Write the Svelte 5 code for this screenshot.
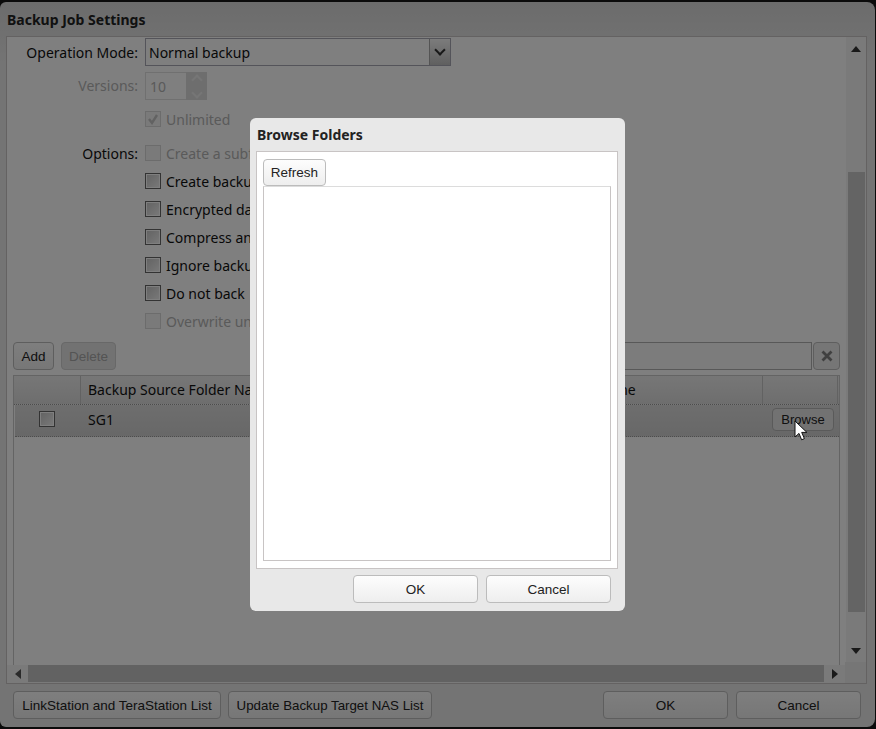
<script lang="ts">
  const options = [
    { label: "Create a subfolder", disabled: true, checked: false },
    { label: "Create backup", disabled: false, checked: false },
    { label: "Encrypted data", disabled: false, checked: false },
    { label: "Compress and", disabled: false, checked: false },
    { label: "Ignore backup", disabled: false, checked: false },
    { label: "Do not back", disabled: false, checked: false },
    { label: "Overwrite unchanged", disabled: true, checked: false }
  ];
</script>

<div class="window">
  <h1 class="title">Backup Job Settings</h1>

  <div class="panel">
    <div class="scroll-row">
      <div class="content">
        <div class="form">
          <div class="field mode">
            <span class="label">Operation Mode:</span>
            <div class="select">
              <span>Normal backup</span>
              <span class="select-btn"><i class="chev dark"></i></span>
            </div>
          </div>
          <div class="field versions">
            <span class="label off">Versions:</span>
            <div class="spinner">
              <span class="spin-value">10</span>
              <span class="spin-btns"><i class="chev up"></i><i class="chev dn"></i></span>
            </div>
          </div>
          <div class="field unlimited">
            <span class="label"></span>
            <span class="check off">
              <svg viewBox="0 0 16 16" width="16" height="16"><path d="M4 8l3 4 5-8" fill="none" stroke="#c4c4c4" stroke-width="2.4" /></svg>
            </span>
            <span class="off">Unlimited</span>
          </div>
          <div class="opts">
            {#each options as opt, i}
              <div class="field opt">
                <span class="label">{i === 0 ? "Options:" : ""}</span>
                <span class="check" class:off={opt.disabled}></span>
                <span class:off={opt.disabled}>{opt.label}</span>
              </div>
            {/each}
          </div>
        </div>

        <div class="toolbar">
          <button class="btn add">Add</button>
          <button class="btn del" disabled>Delete</button>
          <div class="spacer"></div>
          <div class="search"></div>
          <button class="btn clear" aria-label="Clear">
            <svg viewBox="0 0 12 12" width="12" height="12"><path d="M1.5 1.5l9 9M10.5 1.5l-9 9" stroke="#808080" stroke-width="2.8" /></svg>
          </button>
        </div>

        <div class="grid">
          <div class="grid-row head">
            <div class="cell c1"></div>
            <div class="cell c2">Backup Source Folder Name</div>
            <div class="cell c3">Backup Target Folder Name</div>
            <div class="cell c4"></div>
          </div>
          <div class="grid-row item">
            <div class="cell c1"><span class="check box"></span></div>
            <div class="cell c2">SG1</div>
            <div class="cell c3"></div>
            <div class="cell c4"><button class="btn browse">Browse</button></div>
          </div>
        </div>
      </div>

      <div class="vbar">
        <span class="arrow"><i class="tri up"></i></span>
        <div class="vtrack"><div class="vthumb"></div></div>
        <span class="arrow"><i class="tri down"></i></span>
      </div>
    </div>

    <div class="hbar">
      <span class="harrow"><i class="tri left"></i></span>
      <div class="hthumb"></div>
      <span class="harrow"><i class="tri right"></i></span>
      <span class="corner"></span>
    </div>
  </div>

  <div class="footer">
    <button class="btn list1">LinkStation and TeraStation List</button>
    <button class="btn list2">Update Backup Target NAS List</button>
    <div class="spacer"></div>
    <button class="btn wide">OK</button>
    <button class="btn wide">Cancel</button>
  </div>
</div>

<div class="mask"></div>

<div class="modal">
  <h2 class="modal-title">Browse Folders</h2>
  <div class="modal-panel">
    <button class="btn refresh">Refresh</button>
    <div class="tree"></div>
  </div>
  <div class="modal-footer">
    <button class="btn wide">OK</button>
    <button class="btn wide">Cancel</button>
  </div>
</div>

<svg class="cursor" viewBox="0 0 14 22" width="14" height="22">
  <path d="M1 1v16l4-3.6 2.6 6.4 2.8-1.2-2.7-6.2h5.2z" fill="#fff" stroke="#111" stroke-width="1" />
</svg>

<style>
  :global(body) {
    margin: 0;
    background: #161616;
    font-family: "Noto Sans", "Open Sans", sans-serif;
    font-size: 14px;
    color: #111;
  }
  .window {
    box-sizing: border-box;
    width: 875px;
    height: 725px;
    margin-top: 2px;
    background: linear-gradient(#d8d8d8, #e8e8e8 60px);
    border-radius: 6px 8px 8px 6px;
    padding: 0 8px 0 6px;
    display: flex;
    flex-direction: column;
  }
  .title {
    margin: 0;
    height: 34px;
    box-sizing: border-box;
    padding: 8px 0 0 1px;
    font-size: 14px;
    line-height: 20px;
    font-weight: 700;
    color: #222;
  }
  .panel {
    box-sizing: border-box;
    height: 648px;
    background: #fff;
    border: 1px solid #c8c4c4;
    display: flex;
    flex-direction: column;
  }
  .scroll-row { flex: 1; display: flex; min-height: 0; }
  .content { flex: 1; min-width: 0; padding: 1px 0 0 6px; display: flex; flex-direction: column; }
  .form { display: flex; flex-direction: column; }
  .field { display: flex; align-items: center; height: 28px; }
  .label { width: 125px; margin-right: 7px; text-align: right; flex: none; }
  .off { color: #b4b4b4; }
  .label.off { color: #b4b4b4; margin-bottom: 2px; }
  .versions { margin-top: 6px; }
  .unlimited { margin-top: 5px; }
  .opts { margin-top: 6px; }
  .select {
    box-sizing: border-box;
    width: 306px;
    height: 28px;
    border: 1px solid #a8a8b4;
    background: #fff;
    display: flex;
    align-items: center;
    justify-content: space-between;
    padding-left: 3px;
  }
  .select-btn {
    box-sizing: border-box;
    width: 21px;
    height: 26px;
    border-left: 1px solid #a8a8a8;
    background: linear-gradient(#f8f8f8, #c0c0c0);
    display: flex;
    align-items: center;
    justify-content: center;
  }
  .spinner {
    box-sizing: border-box;
    width: 62px;
    height: 28px;
    border: 1px solid #e0e0e0;
    display: flex;
    align-items: center;
    justify-content: space-between;
    padding-left: 4px;
    color: #b4b4b4;
  }
  .spin-btns {
    width: 21px;
    height: 28px;
    margin-right: -1px;
    background: #dcdcdc;
    display: flex;
    flex-direction: column;
    align-items: center;
    justify-content: center;
    gap: 5px;
  }
  .chev { width: 6px; height: 6px; border: solid #ececec; border-width: 2px 0 0 2px; transform: rotate(45deg); display: block; }
  .chev.up { margin-top: 3px; }
  .chev.dn { transform: rotate(225deg); margin-bottom: 3px; }
  .chev.dark { box-sizing: border-box; width: 8px; height: 8px; border-color: #333; border-width: 0 2.5px 2.5px 0; margin-top: -4px; }
  .check {
    box-sizing: border-box;
    width: 16px;
    height: 16px;
    border: 1px solid #666;
    background: linear-gradient(135deg, #c4c4c4, #f4f4f4);
    box-shadow: inset 0 0 0 1px #fff;
    margin-right: 5px;
    flex: none;
    display: block;
  }
  .check.off { border-color: #d8d8d8; background: #f4f4f4; box-shadow: none; }
  .check svg { display: block; margin: -1px; }
  .toolbar { display: flex; height: 28px; margin-top: 7px; margin-right: 6px; }
  .spacer { flex: 1; }
  .btn {
    box-sizing: border-box;
    height: 28px;
    padding: 0;
    border: 1px solid #bcbcbc;
    border-radius: 4px;
    background: linear-gradient(#fdfdfd, #eeeeee);
    font-family: "Liberation Sans", sans-serif;
    font-size: 13.5px;
    color: #222;
  }
  .add { width: 41px; margin-right: 7px; }
  .del { width: 55px; color: #a8a8a8; background: #e4e4e4; border-color: #d0d0d0; }
  .search {
    box-sizing: border-box;
    width: 250px;
    height: 28px;
    border: 1px solid #b0b0b0;
    background: #f8f8f8;
    margin-right: 1px;
  }
  .clear { width: 27px; display: flex; align-items: center; justify-content: center; background: #ececec; }
  .grid {
    flex: 1;
    margin-top: 5px;
    border: solid #c8c8c8;
    border-width: 1px 1px 0 1px;
    margin-right: 6px;
  }
  .grid-row { display: grid; grid-template-columns: 67px 1fr 1fr 76px; padding-right: 1px; }
  .head {
    height: 29px;
    background: linear-gradient(#eeeeee, #dcdcdc);
    border-bottom: 1px dotted #999;
    box-sizing: border-box;
  }
  .head .cell { padding-bottom: 2px; }
  .head .c1 { border-right: 1px solid #c4c4c4; }
  .head .c4 { border-left: 1px solid #c4c4c4; border-right: 1px solid #c4c4c4; }
  .item {
    height: 32px;
    box-sizing: border-box;
    margin-left: 1px;
    background: linear-gradient(#dcdcdc, #d0d0d0);
    border-bottom: 1px dotted #999;
    grid-template-columns: 66px 1fr 1fr 76px;
  }
  .cell { display: flex; align-items: center; box-sizing: border-box; padding-left: 7px; white-space: nowrap; overflow: hidden; }
  .c1 { justify-content: center; padding: 0; }
  .box { margin: 0; }
  .c3 { justify-content: flex-start; padding-left: 32px; }
  .item .c1 { padding: 0 2px 4px 0; }
  .item .c2 { padding-bottom: 3px; }
  .item .c4 { padding: 0 0 2px 10px; }
  .c4 { padding: 0 0 0 10px; }
  .browse { width: 62px; height: 23px; font-size: 13px; background: #e4e4e4; border-color: #b4b4b4; }

  .vbar { width: 20px; background: #f4f4f4; display: flex; flex-direction: column; align-items: center; padding-bottom: 3px; box-sizing: border-box; }
  .arrow { height: 22px; display: flex; align-items: center; justify-content: center; flex: none; }
  .vbar .arrow:first-child { padding-top: 1px; }
  .vtrack { flex: 1; width: 100%; padding: 112px 1px 28px 2px; box-sizing: border-box; display: flex; }
  .vthumb { flex: 1; background: #c8c8c8; }
  .hbar { height: 18px; display: flex; background: #f4f4f4; flex: none; }
  .harrow { width: 21px; display: flex; align-items: center; justify-content: center; flex: none; }
  .hthumb { flex: 1; background: #c4c4c4; margin: 0 0 1px 0; }
  .corner { width: 21px; height: 21px; margin-top: -3px; background: #ececec; flex: none; }

  .tri { display: block; width: 0; height: 0; border: 5px solid transparent; }
  .tri.up { border-bottom: 6px solid #333; border-top: 0; }
  .tri.down { border-top: 6px solid #333; border-bottom: 0; }
  .tri.left { border-right: 6px solid #555; border-left: 0; }
  .tri.right { border-left: 6px solid #333; border-right: 0; }

  .footer { display: flex; height: 28px; margin-top: 7px; padding: 0 6px 0 7px; }
  .list1 { width: 208px; margin-right: 7px; }
  .list2 { width: 204px; font-size: 13.3px; }
  .wide { width: 125px; }
  .footer .wide + .wide { margin-left: 8px; }

  .mask { position: fixed; inset: 0; background: rgba(0, 0, 0, 0.5); }
  .modal {
    position: fixed;
    left: 250px;
    top: 118px;
    width: 375px;
    height: 493px;
    box-sizing: border-box;
    background: #e8e8e8;
    border-radius: 6px;
    padding: 0 7px 0 6px;
    display: flex;
    flex-direction: column;
  }
  .modal-title { margin: 0; height: 33px; padding: 7px 0 0 1px; box-sizing: border-box; font-size: 14px; line-height: 20px; font-weight: 700; color: #222; }
  .modal-panel {
    box-sizing: border-box;
    height: 418px;
    background: #fff;
    border: 1px solid #c8c4c4;
    padding: 7px 6px;
    display: flex;
    flex-direction: column;
    align-items: flex-start;
  }
  .refresh { width: 63px; height: 27px; flex: none; }
  .tree { box-sizing: border-box; width: 348px; flex: 1; border: 1px solid #c8c4c4; border-top-color: #dcdcdc; background: #fff; }
  .modal-footer { display: flex; justify-content: flex-end; margin-top: 6px; padding-right: 7px; gap: 8px; }
  .cursor { position: fixed; left: 794px; top: 420px; }
</style>
